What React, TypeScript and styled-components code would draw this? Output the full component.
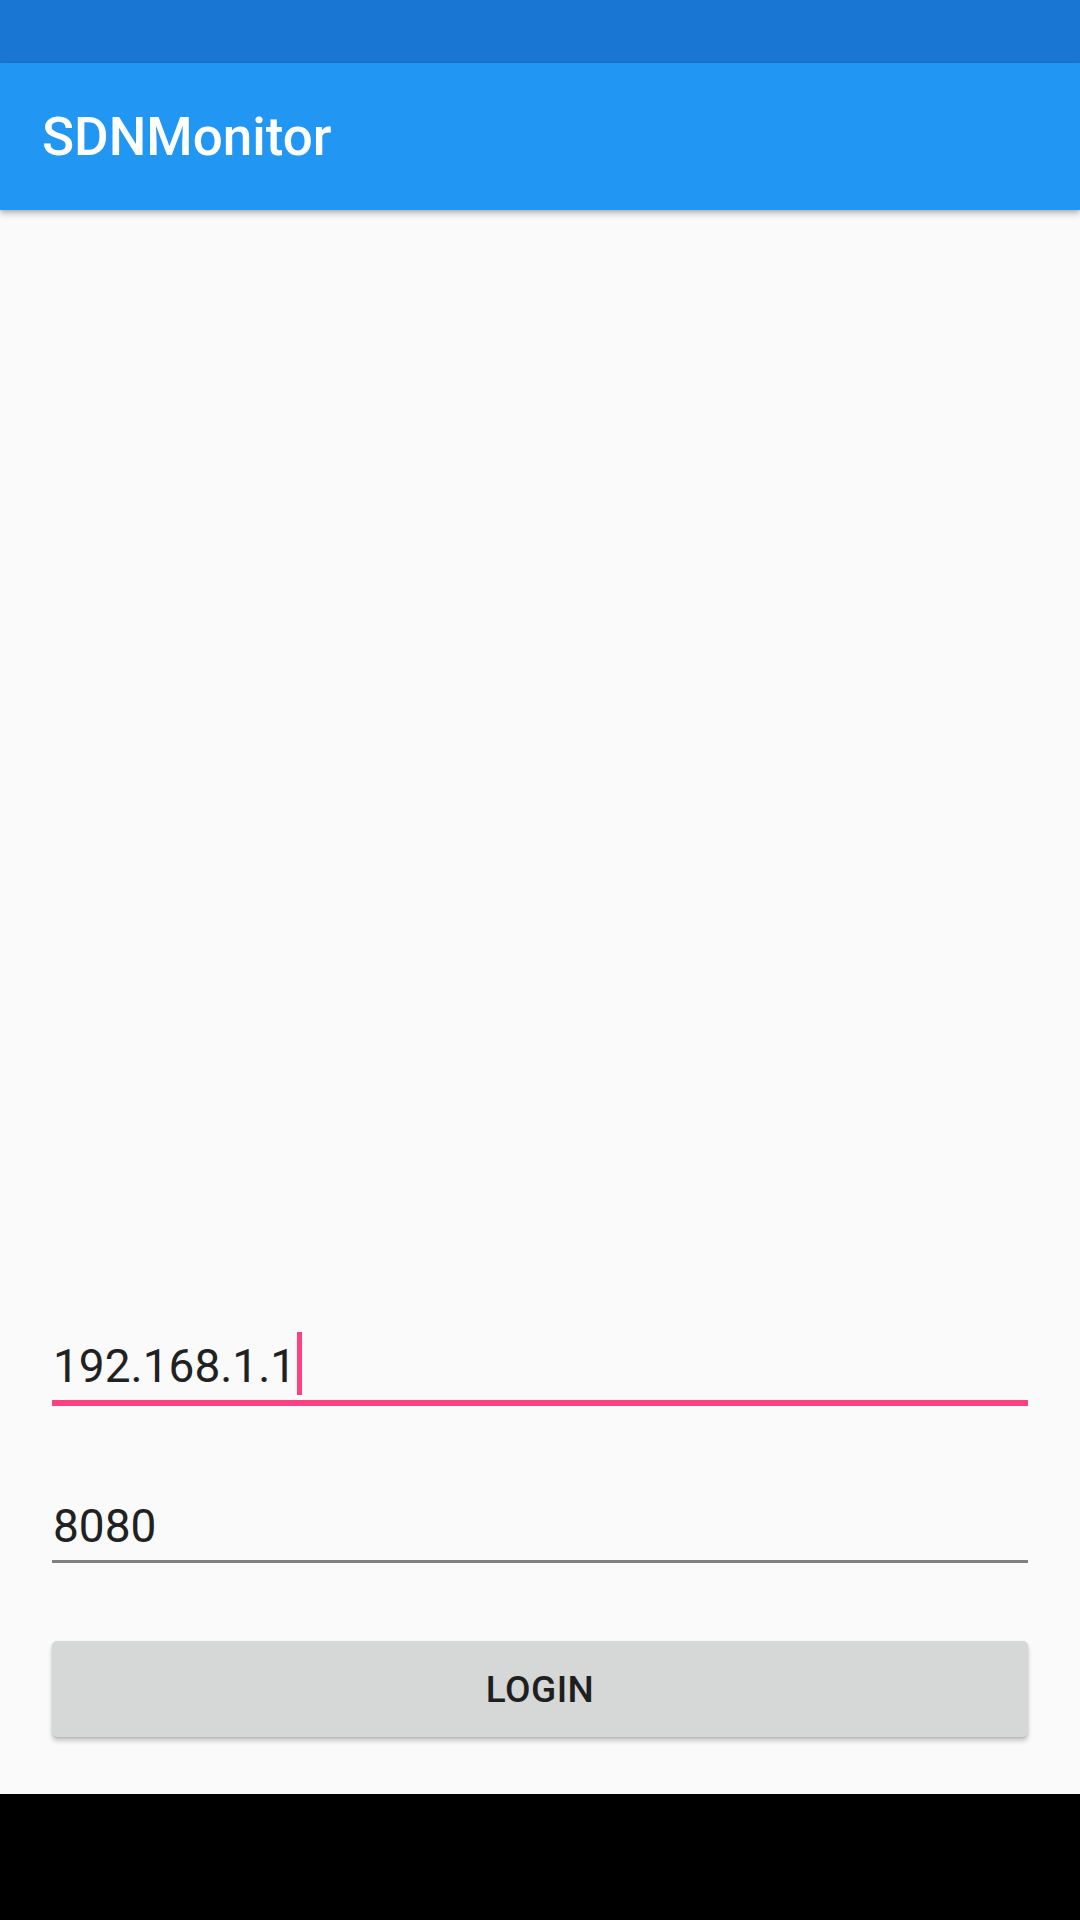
import React from "react"
import styled, { createGlobalStyle } from "styled-components"

const GlobalStyle = createGlobalStyle`
	html, body {
		margin: 0;
		padding: 0;
		background: #000;
	}
	body {
		font-family: Roboto, "Noto Sans", "Liberation Sans", sans-serif;
	}
`

const Screen = styled.div`
	width: 1080px;
	height: 1920px;
	display: flex;
	flex-direction: column;
	background-color: #fafafa;
	overflow: hidden;
`

const StatusBar = styled.div`
	height: 63px;
	flex-shrink: 0;
	background-color: #1976d2;
`

const AppBar = styled.header`
	height: 147px;
	flex-shrink: 0;
	display: flex;
	align-items: center;
	padding-left: 42px;
	background-color: #2196f3;
	box-shadow: 0 4px 6px rgba(0, 0, 0, 0.22), 0 1px 3px rgba(0, 0, 0, 0.12);
	position: relative;
	z-index: 1;
`

const Title = styled.h1`
	margin: 0;
	color: #ffffff;
	font-family: Roboto, "Noto Sans", sans-serif;
	font-size: 53px;
	font-weight: 500;
`

const Content = styled.main`
	flex: 1;
	display: flex;
	flex-direction: column;
	justify-content: flex-end;
	padding: 0 52px 57px 52px;
`

const Field = styled.div<{ focused?: boolean }>`
	height: 70px;
	display: flex;
	align-items: flex-end;
	border-bottom: ${(props) => (props.focused ? "6px solid #ff4081" : "3px solid #808080")};
	& + & {
		margin-top: 84px;
	}
`

const Value = styled.span`
	font-family: Roboto, "Noto Sans", sans-serif;
	font-size: 46px;
	line-height: 56px;
	color: #212121;
	margin-bottom: 6px;
	margin-left: 1px;
`

const Cursor = styled.span`
	width: 5px;
	height: 63px;
	margin-left: 1px;
	margin-bottom: 5px;
	background-color: #ff4081;
`

const LoginButton = styled.button`
	margin-top: 78px;
	height: 96px;
	width: 100%;
	border: none;
	border-radius: 5px;
	background-color: #d6d7d7;
	color: #1f1f1f;
	font-family: Roboto, "Noto Sans", sans-serif;
	font-size: 37px;
	font-weight: 500;
	letter-spacing: 0.5px;
	text-transform: uppercase;
	box-shadow: 0 4px 5px rgba(0, 0, 0, 0.2), 0 1px 2px rgba(0, 0, 0, 0.12);
	cursor: pointer;
`

const NavBar = styled.div`
	height: 126px;
	flex-shrink: 0;
	background-color: #000000;
`

const App: React.FC = () => {
	return (
		<>
			<GlobalStyle />
			<Screen>
				<StatusBar />
				<AppBar>
					<Title>SDNMonitor</Title>
				</AppBar>
				<Content>
					<Field focused>
						<Value>192.168.1.1</Value>
						<Cursor />
					</Field>
					<Field>
						<Value>8080</Value>
					</Field>
					<LoginButton>Login</LoginButton>
				</Content>
				<NavBar />
			</Screen>
		</>
	)
}

export default App
